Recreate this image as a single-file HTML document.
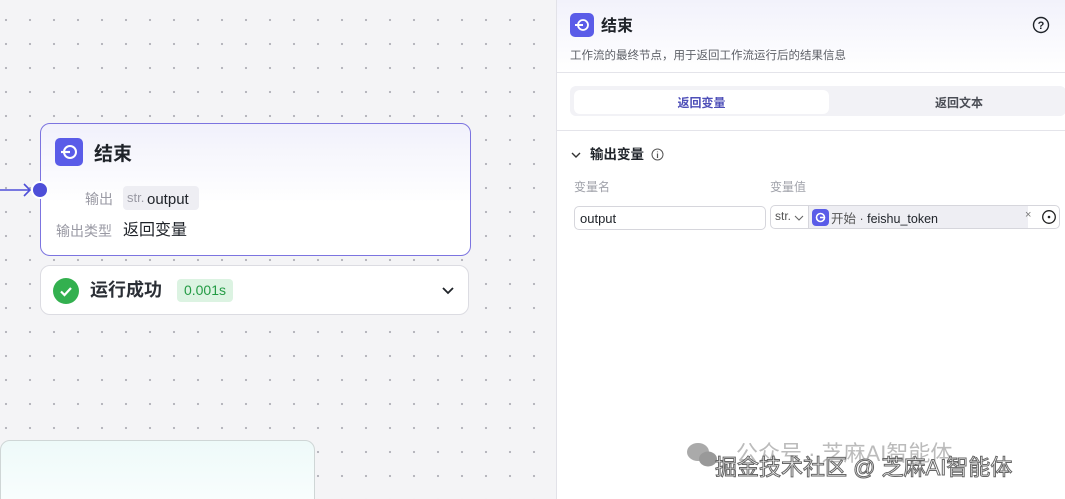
<!DOCTYPE html>
<html><head><meta charset="utf-8"><style>
*{box-sizing:border-box;margin:0;padding:0}
html{overflow:hidden;width:1065px;height:499px}
body{width:1065px;height:499px;overflow:hidden;position:relative;font-family:"Liberation Sans","Noto Sans CJK SC",sans-serif;background:#f3f3f5}
.canvas{position:absolute;left:0;top:0;width:556px;height:499px;background-color:#f4f4f6;background-image:radial-gradient(circle,#b0b0b8 0.9px,transparent 1.3px);background-size:24px 24px;background-position:-6px 8px;overflow:hidden}
.node{position:absolute;left:40px;top:123px;width:431px;height:133px;border:1.5px solid #7c74e0;border-radius:10px;background:linear-gradient(180deg,#f1f1fb 0,#fff 60%);}
.ico{position:absolute;width:28px;height:28px;border-radius:5px;background:#5a5ce8;}
.t{position:absolute;color:#1f2329;line-height:1.2}
.run{position:absolute;left:40px;top:265px;width:429px;height:50px;border:1px solid #dcdce2;border-radius:10px;background:#fff}
.panel{position:absolute;left:556px;top:0;width:509px;height:499px;background:#fff;border-left:1px solid #e2e2e8;overflow:hidden}
.inp{position:absolute;height:24px;border:1px solid #d6d6dc;border-radius:5px;background:#fff}
</style></head><body>
<div class="canvas">
<div style="position:absolute;left:0;top:440px;width:315px;height:70px;border:1px solid #cfd6d6;border-radius:10px;background:linear-gradient(180deg,#eefaf9,#fafefe)"></div>
</div>
<svg style="position:absolute;left:0;top:180px" width="40" height="20"><path d="M0 10H30M24 4L30 10L24 16" stroke="#4e4fd8" stroke-width="1.6" fill="none"/></svg>
<div class="node">
 <div class="ico" style="left:14px;top:14px"><svg width="28" height="28"><circle cx="15" cy="14" r="6" stroke="#fff" stroke-width="2" fill="none"/><path d="M6 14H15" stroke="#fff" stroke-width="2.2"/></svg></div>
 <div class="t" style="left:53px;top:20px;font-size:19px;font-weight:bold">结束</div>
 <div class="t" style="left:44px;top:67px;font-size:14px;color:#9a9aa4">输出</div>
 <div style="position:absolute;left:82px;top:62px;width:76px;height:24px;background:#eeeef3;border-radius:4px"></div>
 <div class="t" style="left:86px;top:66px;font-size:13px;color:#9a9aa4">str.</div>
 <div class="t" style="left:106px;top:67px;font-size:15px">output</div>
 <div class="t" style="left:15px;top:99px;font-size:14px;color:#9a9aa4">输出类型</div>
 <div class="t" style="left:82px;top:97px;font-size:16px">返回变量</div>
</div>
<div style="position:absolute;left:31px;top:181px;width:18px;height:18px;border-radius:50%;background:#4e4fd8;border:2px solid #fff"></div>
<div class="run">
 <div style="position:absolute;left:12px;top:12px;width:26px;height:26px;border-radius:50%;background:#33b04f"><svg width="26" height="26"><path d="M8 13.5L11.5 17L18 10" stroke="#fff" stroke-width="2.2" fill="none"/></svg></div>
 <div class="t" style="left:49px;top:14px;font-size:18px;font-weight:bold;color:#2b2f36">运行成功</div>
 <div style="position:absolute;left:136px;top:13px;width:56px;height:23px;background:#dcf3e2;border-radius:4px;color:#249b45;font-size:14px;line-height:23px;text-align:center">0.001s</div>
 <svg style="position:absolute;left:400px;top:18px" width="14" height="14"><path d="M2 4L7 9L12 4" stroke="#1f2329" stroke-width="1.8" fill="none"/></svg>
</div>
<div class="panel">
 <div style="position:absolute;left:0;top:0;width:509px;height:73px;background:linear-gradient(180deg,#f2f2fb,#fff);border-bottom:1px solid #e4e4ea"></div>
 <div class="ico" style="left:13px;top:13px;width:24px;height:24px"><svg width="24" height="24"><circle cx="13" cy="12" r="5" stroke="#fff" stroke-width="1.8" fill="none"/><path d="M5 12H13" stroke="#fff" stroke-width="2"/></svg></div>
 <div class="t" style="left:44px;top:17px;font-size:16px;font-weight:bold">结束</div>
 <svg style="position:absolute;left:475px;top:16px" width="18" height="18"><circle cx="9" cy="9" r="7.5" stroke="#1f2329" stroke-width="1.4" fill="none"/><text x="9" y="13" font-size="11" text-anchor="middle" font-family="Liberation Sans" font-weight="bold" fill="#1f2329">?</text></svg>
 <div class="t" style="left:13px;top:50px;font-size:11.5px;color:#5c5f66">工作流的最终节点，用于返回工作流运行后的结果信息</div>
 <div style="position:absolute;left:13px;top:86px;width:496px;height:30px;background:#f2f2f6;border-radius:6px"></div>
 <div style="position:absolute;left:17px;top:90px;width:255px;height:24px;background:#fff;border-radius:6px;text-align:center;line-height:26px;font-size:12px;font-weight:bold;color:#4e4fb8">返回变量</div>
 <div class="t" style="left:378px;top:96px;font-size:12px;font-weight:bold;color:#4a4d55">返回文本</div>
 <div style="position:absolute;left:0;top:130px;width:509px;border-top:1px solid #e4e4ea"></div>
 <svg style="position:absolute;left:13px;top:149px" width="12" height="12"><path d="M2 4L6 8L10 4" stroke="#333" stroke-width="1.4" fill="none"/></svg>
 <div class="t" style="left:33px;top:147px;font-size:13.5px;font-weight:bold">输出变量</div>
 <svg style="position:absolute;left:94px;top:148px" width="13" height="13"><circle cx="6.5" cy="6.5" r="5.5" stroke="#555" stroke-width="1" fill="none"/><path d="M6.5 5.5V10M6.5 3.5V4.3" stroke="#555" stroke-width="1.2"/></svg>
 <div class="t" style="left:17px;top:180px;font-size:12px;color:#a0a2aa">变量名</div>
 <div class="t" style="left:213px;top:180px;font-size:12px;color:#a0a2aa">变量值</div>
 <div class="inp" style="left:17px;top:206px;width:192px"><span style="position:absolute;left:5px;top:4px;font-size:13px;color:#1f2329">output</span></div>
 <div class="inp" style="left:213px;top:205px;width:290px">
  <span style="position:absolute;left:4px;top:3px;font-size:12px;color:#555">str.</span>
  <svg style="position:absolute;left:23px;top:7px" width="10" height="10"><path d="M1 3L5 7L9 3" stroke="#666" stroke-width="1.1" fill="none"/></svg>
  <div style="position:absolute;left:37px;top:0;width:220px;height:22px;background:#eeeef3;border-left:1px solid #d6d6dc"></div>
  <div style="position:absolute;left:41px;top:3px;width:17px;height:17px;border-radius:4px;background:#5a5ce8"><svg width="17" height="17"><circle cx="8.5" cy="8.5" r="4" stroke="#fff" stroke-width="1.6" fill="none"/><path d="M8 8.5H13" stroke="#fff" stroke-width="1.6"/></svg></div>
  <span style="position:absolute;left:60px;top:2px;font-size:12.5px;color:#555">开始 · <span style="color:#1f2329">feishu_token</span></span>
  <span style="position:absolute;left:254px;top:3px;font-size:11px;color:#777">×</span>
  <svg style="position:absolute;left:270px;top:3px" width="16" height="16"><circle cx="8" cy="8" r="6.3" stroke="#222" stroke-width="1.3" fill="none"/><circle cx="8" cy="8" r="1.3" fill="#222"/></svg>
 </div>
 <svg style="position:absolute;left:128px;top:440px" width="36" height="30"><ellipse cx="13" cy="12" rx="11" ry="9" fill="#aaa"/><ellipse cx="23" cy="19" rx="9" ry="7.5" fill="#999"/></svg>
 <div style="position:absolute;left:179px;top:441px;font-size:22px;line-height:1.2;color:rgba(120,120,120,0.5)">公众号 · 芝麻AI智能体</div>
 <div style="position:absolute;left:158px;top:455px;font-size:22px;line-height:1.2;color:#fff;-webkit-text-stroke:1px #666">掘金技术社区 @ 芝麻AI智能体</div>
</div>
</body></html>
